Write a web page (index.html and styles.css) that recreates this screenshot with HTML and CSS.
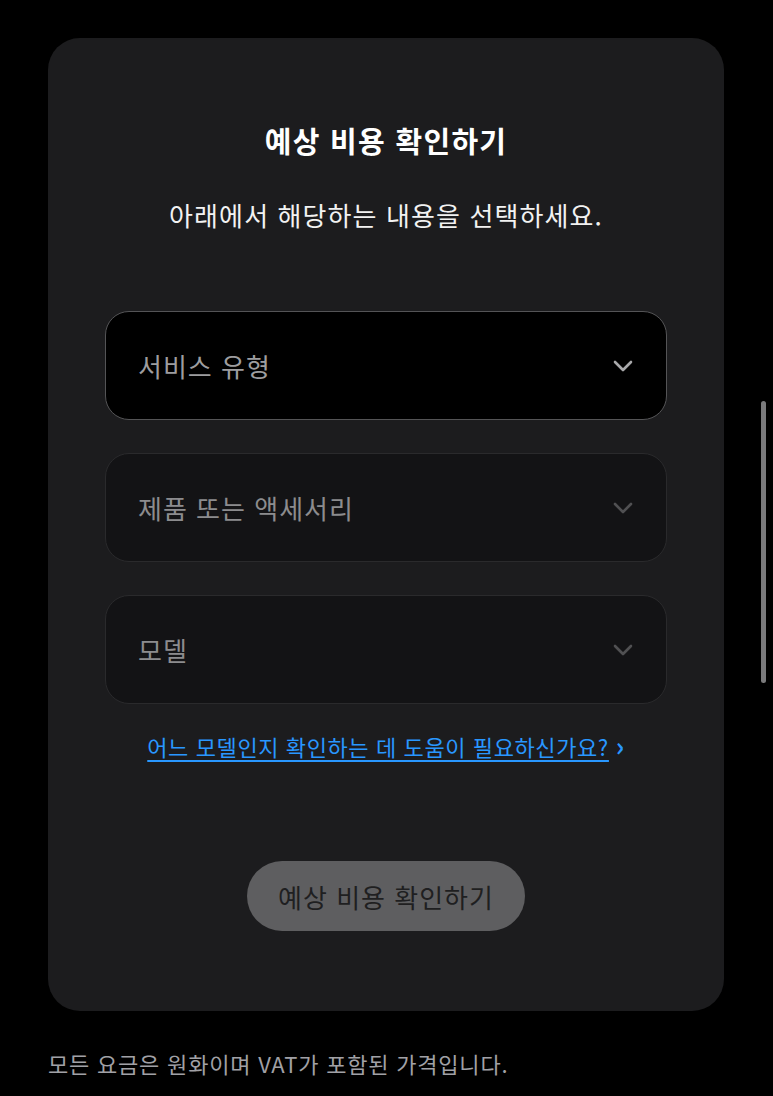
FILE: index.html
```html
<!DOCTYPE html>
<html lang="ko">
<head>
  <meta charset="UTF-8">
  <meta name="viewport" content="width=device-width, initial-scale=1.0">
  <title>예상 비용 확인하기</title>
  <link rel="stylesheet" href="styles.css">
</head>
<body>
  <div class="page">
    <!-- 예상 비용 카드 -->
    <section class="estimate-card">
      <h1 class="estimate-title">예상 비용 확인하기</h1>
      <p class="estimate-sub">아래에서 해당하는 내용을 선택하세요.</p>

      <div class="selects">
        <div class="select active">
          <span class="select-label">서비스 유형</span>
          <svg class="chevron" viewBox="0 0 24 24"><path d="M4 8l8 8 8-8"/></svg>
        </div>
        <div class="select disabled">
          <span class="select-label">제품 또는 액세서리</span>
          <svg class="chevron" viewBox="0 0 24 24"><path d="M4 8l8 8 8-8"/></svg>
        </div>
        <div class="select disabled">
          <span class="select-label">모델</span>
          <svg class="chevron" viewBox="0 0 24 24"><path d="M4 8l8 8 8-8"/></svg>
        </div>
      </div>

      <a class="help-link" href="#"><span class="help-text">어느 모델인지 확인하는 데 도움이 필요하신가요?</span> <span class="help-arrow">›</span></a>

      <button class="estimate-btn" disabled>예상 비용 확인하기</button>
    </section>

    <p class="footnote">모든 요금은 원화이며 VAT가 포함된 가격입니다.</p>
  </div>

  <!-- 스크롤바 -->
  <div class="scrollbar"></div>
</body>
</html>
```

FILE: styles.css
```css
* {
  margin: 0;
  padding: 0;
  box-sizing: border-box;
}
body {
  font-family: "Noto Sans CJK KR", "Noto Sans", sans-serif;
  background: #000;
  color: #fff;
  min-height: 1096px;
  position: relative;
  overflow: hidden;
}
.page {
  padding: 38px 49px 0 48px;
}
/* 카드 */
.estimate-card {
  background: #1c1c1e;
  border-radius: 32px;
  padding: 82px 57px 80px;
  display: flex;
  flex-direction: column;
  align-items: center;
}
.estimate-title {
  font-size: 29px;
  font-weight: 700;
  line-height: 40px;
  letter-spacing: 1.3px;
}
.estimate-sub {
  margin-top: 37px;
  font-size: 26px;
  line-height: 36px;
  letter-spacing: 1.1px;
  color: #f2f2f2;
}
.selects {
  width: 100%;
  margin-top: 78px;
  display: flex;
  flex-direction: column;
  gap: 33px;
}
.select {
  height: 109px;
  border-radius: 24px;
  display: flex;
  align-items: center;
  justify-content: space-between;
  padding: 0 31px 0 32px;
  font-size: 26px;
  letter-spacing: 1px;
}
.select.active {
  background: #000;
  border: 1.5px solid #545456;
  color: #9d9d9f;
}
.select.disabled {
  background: #131315;
  border: 1.5px solid #2a2a2c;
  color: #8c8c8e;
}
.chevron {
  width: 24px;
  height: 24px;
  fill: none;
  stroke: #a8a8aa;
  stroke-width: 2.6;
  stroke-linecap: round;
  stroke-linejoin: round;
}
.select.disabled .chevron {
  stroke: #505052;
}
/* 도움말 링크 */
.help-link {
  margin-top: 25px;
  font-size: 22px;
  line-height: 32px;
  letter-spacing: 0.6px;
  color: #2997ff;
  text-decoration: none;
}
.help-text {
  text-decoration: underline;
  text-underline-offset: 4px;
  text-decoration-thickness: 1.5px;
}
.help-arrow {
  font-size: 26px;
  font-weight: 700;
}
.estimate-btn {
  margin-top: 99px;
  height: 70px;
  padding: 0 31px;
  border: none;
  border-radius: 35px;
  background: #5e5e60;
  color: #1f1f21;
  font-family: inherit;
  font-size: 26px;
  letter-spacing: 1px;
}
.footnote {
  margin-top: 36px;
  font-size: 22px;
  line-height: 32px;
  letter-spacing: 0.8px;
  color: #a1a1a6;
}
.scrollbar {
  position: absolute;
  top: 401px;
  left: 761px;
  width: 5px;
  height: 282px;
  border-radius: 3px;
  background: #7a7a7c;
}
```
